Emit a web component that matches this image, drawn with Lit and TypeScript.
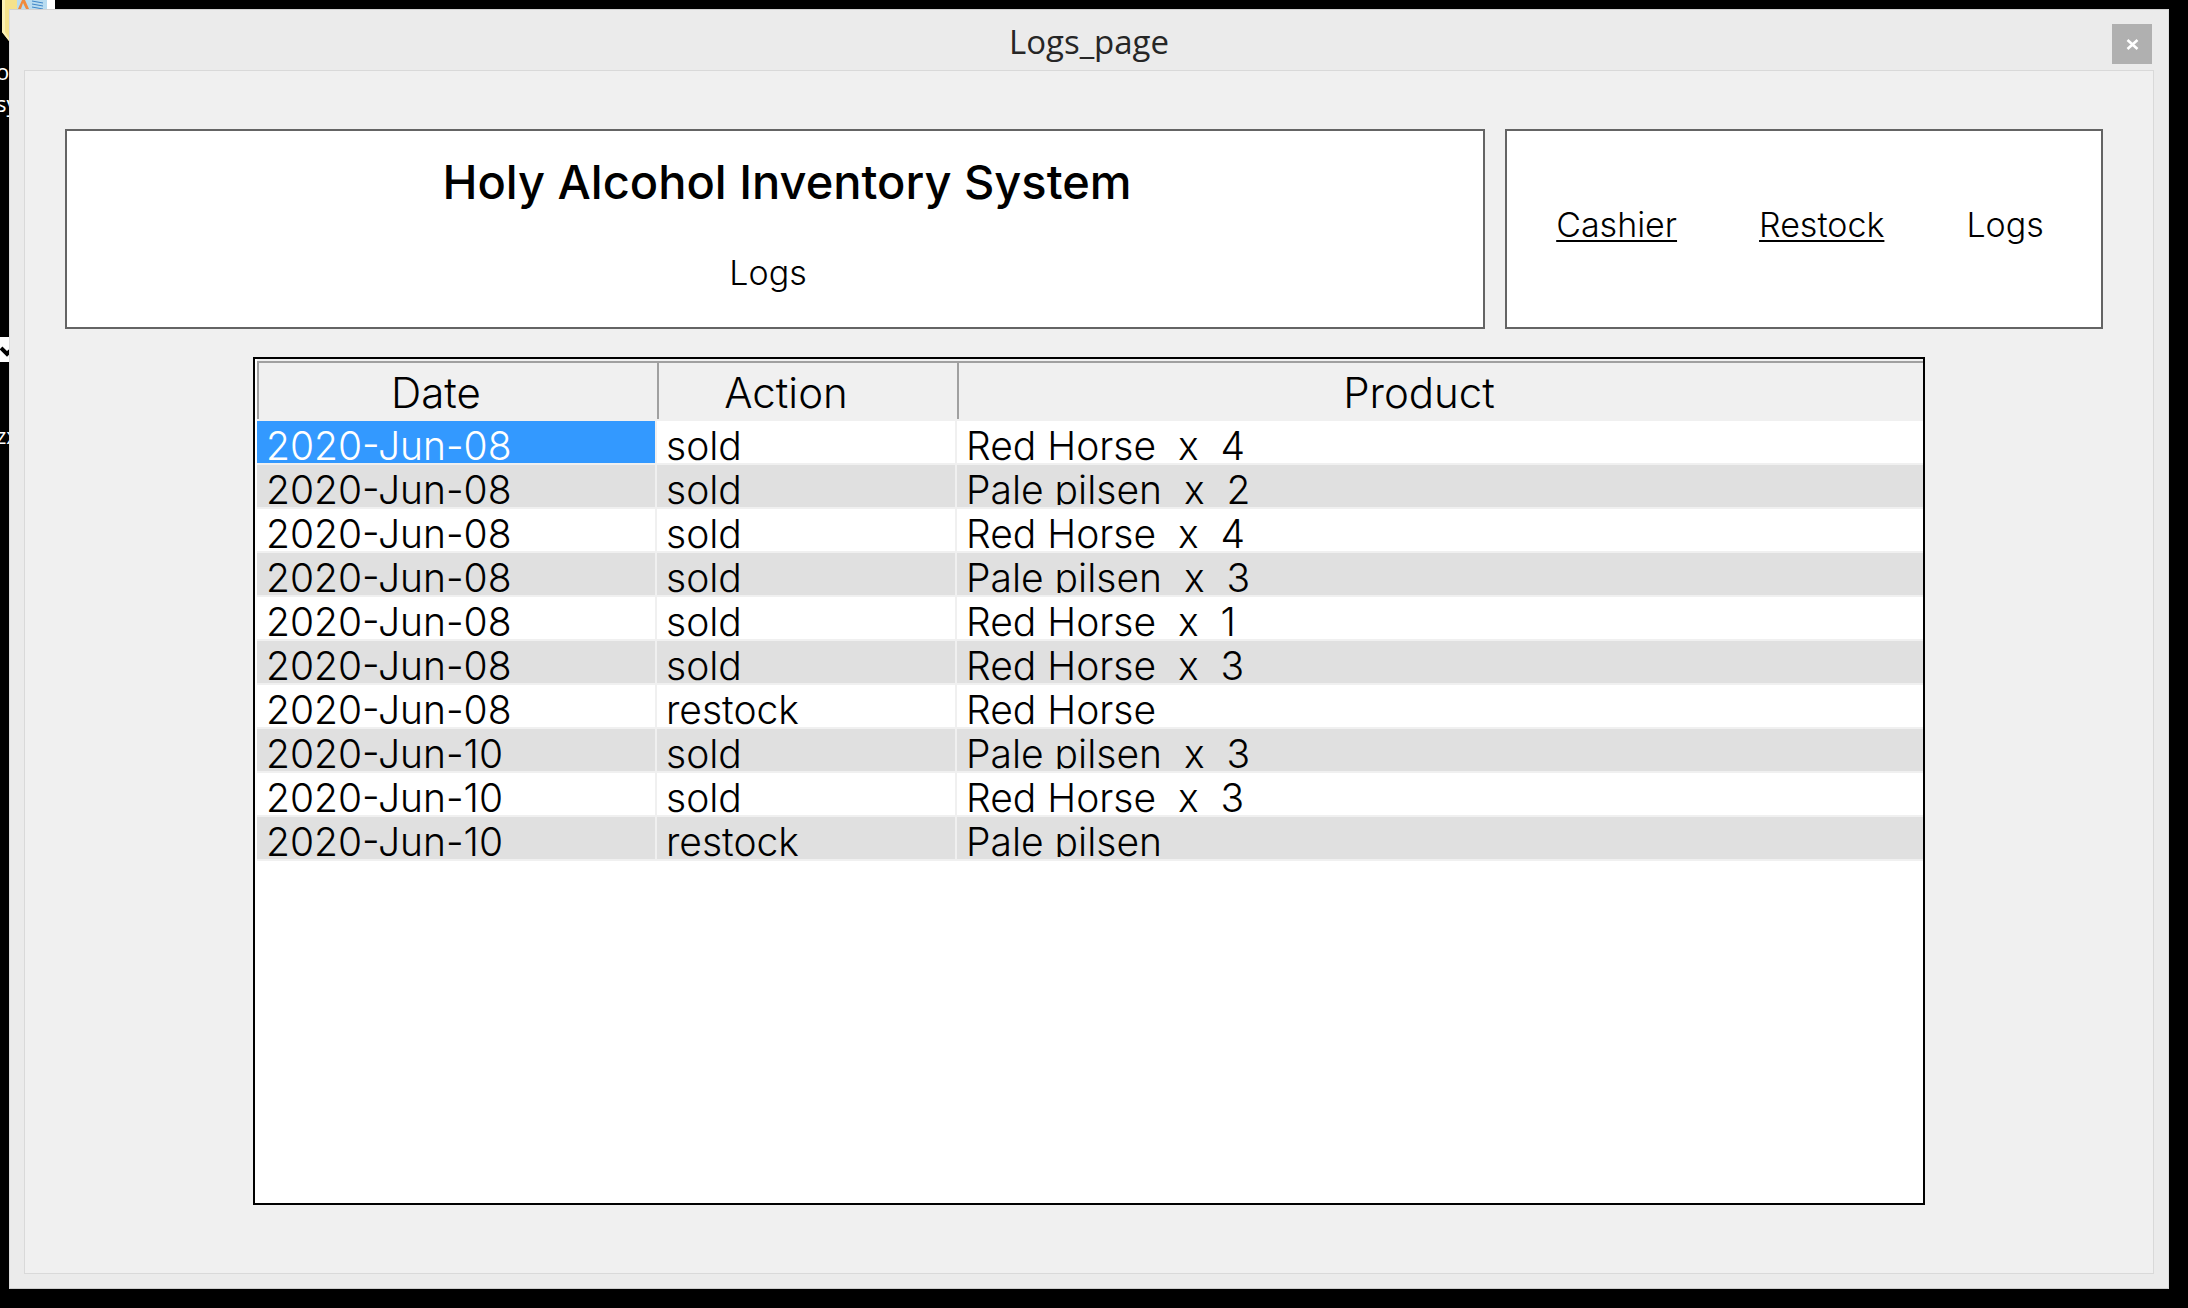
import { LitElement, html, css } from "lit";
import { customElement, property, state } from "lit/decorators.js";
import { classMap } from "lit/directives/class-map.js";

interface LogEntry {
  date: string;
  action: string;
  product: string;
}

const LOGS: LogEntry[] = [
  { date: "2020-Jun-08", action: "sold", product: "Red Horse  x  4" },
  { date: "2020-Jun-08", action: "sold", product: "Pale pilsen  x  2" },
  { date: "2020-Jun-08", action: "sold", product: "Red Horse  x  4" },
  { date: "2020-Jun-08", action: "sold", product: "Pale pilsen  x  3" },
  { date: "2020-Jun-08", action: "sold", product: "Red Horse  x  1" },
  { date: "2020-Jun-08", action: "sold", product: "Red Horse  x  3" },
  { date: "2020-Jun-08", action: "restock", product: "Red Horse" },
  { date: "2020-Jun-10", action: "sold", product: "Pale pilsen  x  3" },
  { date: "2020-Jun-10", action: "sold", product: "Red Horse  x  3" },
  { date: "2020-Jun-10", action: "restock", product: "Pale pilsen" },
];

@customElement("logs-table")
export class LogsTable extends LitElement {
  @property({ attribute: false }) entries: LogEntry[] = [];
  @state() private selected = "0-date";

  static styles = css`
    :host {
      display: block;
      box-sizing: border-box;
      background: #ffffff;
      border: 2px solid #000000;
      padding-left: 2px;
      font-family: Inter, "Open Sans", sans-serif;
      font-weight: 300;
      color: #000000;
    }
    .table {
      width: 100%;
      table-layout: fixed;
      border-collapse: separate;
      border-spacing: 0;
    }
    .date {
      width: 400px;
    }
    .action {
      width: 300px;
    }
    .head {
      height: 62px;
      box-sizing: border-box;
      padding: 2px 0;
      background: #f0f0f0;
      font-size: 42px;
      font-weight: 300;
      line-height: 60px;
    }
    .label {
      display: block;
      height: 58px;
      box-sizing: border-box;
      border-top: 2px solid #a0a0a0;
      border-left: 2px solid #a0a0a0;
      padding-right: 44px;
    }
    .cell {
      height: 44px;
      box-sizing: border-box;
      padding: 0;
      border-right: 2px solid #f0f0f0;
      border-bottom: 2px solid #f0f0f0;
      font-size: 39px;
    }
    .cell:last-child {
      border-right: 0;
    }
    .text {
      height: 40px;
      margin-bottom: 2px;
      box-sizing: border-box;
      padding: 7px 0 0 9px;
      line-height: 36px;
      white-space: pre;
      overflow: hidden;
    }
    .striped {
      background: #e0e0e0;
    }
    .selected {
      background: #3399ff;
      color: #ffffff;
    }
  `;

  private cell(row: number, key: keyof LogEntry) {
    const id = `${row}-${key}`;
    return html`<td
      class=${classMap({ cell: true, striped: row % 2 === 1, selected: this.selected === id })}
      @click=${() => (this.selected = id)}
    ><div class="text">${this.entries[row][key]}</div></td>`;
  }

  render() {
    return html`
      <table class="table">
        <thead>
          <tr>
            <th class="head date" scope="col"><span class="label">Date</span></th>
            <th class="head action" scope="col"><span class="label">Action</span></th>
            <th class="head" scope="col"><span class="label">Product</span></th>
          </tr>
        </thead>
        <tbody>
          ${this.entries.map(
            (_, i) => html`<tr>${this.cell(i, "date")}${this.cell(i, "action")}${this.cell(i, "product")}</tr>`,
          )}
        </tbody>
      </table>
    `;
  }
}

@customElement("desktop-icons")
export class DesktopIcons extends LitElement {
  static styles = css`
    :host {
      position: absolute;
      inset: 0;
      overflow: hidden;
      color: #ffffff;
      font: 22px/24px "Open Sans", sans-serif;
    }
    .folder {
      position: absolute;
      left: 0;
      top: 0;
    }
    .name {
      position: absolute;
      left: -4px;
    }
    .first {
      top: 59px;
    }
    .second {
      top: 91px;
    }
    .third {
      top: 423px;
    }
    .shortcut {
      position: absolute;
      left: 0;
      top: 337px;
    }
  `;

  render() {
    return html`
      <svg class="folder" width="56" height="44" viewBox="0 0 56 44" aria-hidden="true">
        <path d="M2 0H18V44L9 41L2 32Z" fill="#f5e28c" />
        <path d="M2 0H5V32L9 38V41L2 32Z" fill="#fbf0b4" />
        <rect x="17" width="30" height="10" fill="#b9dcf0" />
        <path d="M18 9L22 0H25L29 9H26L23 3L21 9Z" fill="#f08a3c" />
        <path d="M32 1L43 3M32 4L43 6M32 7L43 9" stroke="#3f86c8" stroke-width="1" />
        <rect x="47" width="8" height="10" fill="#ffffff" />
      </svg>
      <span class="name first">o</span>
      <span class="name second">sy</span>
      <svg class="shortcut" width="10" height="25" viewBox="0 0 10 25" aria-hidden="true">
        <rect width="10" height="25" fill="#ffffff" />
        <path d="M1 11L7 17L10 14" stroke="#000000" stroke-width="4" fill="none" />
      </svg>
      <span class="name third">zx</span>
    `;
  }
}

@customElement("app-root")
export class AppRoot extends LitElement {
  static styles = css`
    :host {
      display: flex;
      position: relative;
      box-sizing: border-box;
      min-height: 100vh;
      padding: 9px 19px 19px 9px;
      background: #000000;
    }
    .window {
      position: relative;
      flex: 1;
      display: flex;
      flex-direction: column;
      box-sizing: border-box;
      padding: 0 14px 14px;
      background: #ebebeb;
      border: 1px solid #dcdcdc;
      border-top-color: #d2d2d2;
      border-bottom-color: #cccccc;
    }
    .titlebar {
      display: grid;
      grid-template-columns: 40px 1fr 40px;
      align-items: center;
      height: 60px;
      padding: 0 2px;
      box-sizing: border-box;
    }
    .caption {
      grid-column: 2;
      margin: 0;
      padding-top: 4px;
      text-align: center;
      font: 400 33px/44px "Open Sans", sans-serif;
      color: #262626;
    }
    .close {
      width: 40px;
      height: 40px;
      margin-top: 8px;
      padding: 0;
      border: 0;
      background: #b0b0b0;
      display: grid;
      place-items: center;
    }
    .client {
      flex: 1;
      display: flex;
      flex-direction: column;
      gap: 28px;
      padding: 58px 0 68px;
      background: #f0f0f0;
      border: 1px solid #d9d9d9;
    }
    .header {
      display: grid;
      grid-template-columns: 1420fr 598fr;
      gap: 20px;
      padding: 0 50px 0 40px;
      font-family: Inter, "Open Sans", sans-serif;
      font-weight: 300;
      color: #000000;
    }
    .panel {
      box-sizing: border-box;
      height: 200px;
      background: #ffffff;
      border: 2px solid #646464;
      text-align: center;
    }
    .heading {
      margin: 0;
      padding: 26px 0 0 24px;
      font-size: 47px;
      font-weight: 500;
      line-height: 50px;
    }
    .subtitle {
      margin: 0;
      padding: 46px 14px 0 0;
      font-size: 34px;
      line-height: 40px;
    }
    .nav {
      display: flex;
      justify-content: center;
      align-items: center;
      gap: 82px;
      padding: 0 8px 8px 0;
      font-size: 34px;
      line-height: 40px;
    }
    .link {
      color: inherit;
      text-decoration: underline;
      text-decoration-thickness: 2px;
      text-underline-offset: 3px;
      text-decoration-skip-ink: none;
    }
    .logs {
      flex: 1;
      margin: 0 228px;
    }
  `;

  render() {
    return html`
      <desktop-icons></desktop-icons>
      <div class="window">
        <header class="titlebar">
          <h1 class="caption">Logs_page</h1>
          <button class="close" type="button" aria-label="Close">
            <svg width="13" height="11" viewBox="0 0 13 11" aria-hidden="true">
              <path d="M1.5 1L11.5 10M11.5 1L1.5 10" stroke="#ffffff" stroke-width="2.6" />
            </svg>
          </button>
        </header>
        <main class="client">
          <div class="header">
            <section class="panel">
              <h2 class="heading">Holy Alcohol Inventory System</h2>
              <p class="subtitle">Logs</p>
            </section>
            <nav class="panel nav">
              <a class="link" href="#cashier">Cashier</a>
              <a class="link" href="#restock">Restock</a>
              <span>Logs</span>
            </nav>
          </div>
          <logs-table class="logs" .entries=${LOGS}></logs-table>
        </main>
      </div>
    `;
  }
}
